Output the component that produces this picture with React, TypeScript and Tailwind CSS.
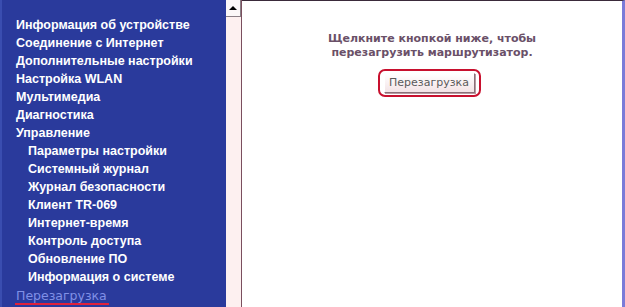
import React from "react";

const items: { label: string; indent?: boolean; active?: boolean }[] = [
  { label: "Информация об устройстве" },
  { label: "Соединение с Интернет" },
  { label: "Дополнительные настройки" },
  { label: "Настройка WLAN" },
  { label: "Мультимедиа" },
  { label: "Диагностика" },
  { label: "Управление" },
  { label: "Параметры настройки", indent: true },
  { label: "Системный журнал", indent: true },
  { label: "Журнал безопасности", indent: true },
  { label: "Клиент TR-069", indent: true },
  { label: "Интернет-время", indent: true },
  { label: "Контроль доступа", indent: true },
  { label: "Обновление ПО", indent: true },
  { label: "Информация о системе", indent: true },
  { label: "Перезагрузка", indent: false, active: true },
];

export default function App() {
  return (
    <div
      className="flex h-[307px] w-[625px] overflow-hidden bg-white"
      style={{ fontFamily: '"DejaVu Sans", Verdana, sans-serif' }}
    >
      <div
        className="h-full w-[226px] shrink-0 border-l-2 border-[#3a4db0] bg-[#2a3a9c] pl-[13px] pt-[16px]"
        style={{ fontFamily: '"Liberation Sans", Arial, sans-serif' }}
      >
        {items.map((it) =>
          it.active ? (
            <div key={it.label} className="h-[18px] leading-[18px]">
              <span
                className="relative pl-[1px] text-[12.5px] text-[#8090e6]"
                style={{ fontFamily: '"DejaVu Sans", Tahoma, sans-serif' }}
              >
                {it.label}
                <span className="absolute left-0 right-[-2px] top-[15px] h-[2px] bg-[#e0203a]" />
              </span>
            </div>
          ) : (
            <div
              key={it.label}
              className={`h-[18px] whitespace-nowrap text-[12.5px] font-bold leading-[18px] text-white ${
                it.indent ? "pl-[13px]" : "pl-[1px]"
              }`}
            >
              {it.label}
            </div>
          )
        )}
      </div>
      <div className="flex h-full w-[16px] shrink-0 flex-col border-r border-[#7a4f5e] bg-[#fdf0f0]">
        <div className="flex h-[17px] items-center justify-center border-b border-r border-[#8a7f86] bg-[#fbf7f8]">
          <div className="h-0 w-0 border-x-[4px] border-b-[4px] border-x-transparent border-b-black" />
        </div>
      </div>
      <div className="flex h-full flex-1 flex-col items-center border-t border-[#3a2a3a] border-r-[3px] border-r-[#7b7bd8] pt-[31px]">
        <p className="text-center text-[11px] font-bold leading-[14px] text-[#6a5068]">
          Щелкните кнопкой ниже, чтобы
          <br />
          перезагрузить маршрутизатор.
        </p>
        <div className="mr-[6px] mt-[9px] flex rounded-[7px] border-2 border-[#c8102e] px-[4px] py-[2px]">
          <button
            className="flex h-[20px] w-[91px] items-center justify-center border border-l-[#ffffff] border-t-[#ffffff] border-r-[#8a7078] border-b-[#8a7078] bg-gradient-to-b from-[#ffffff] to-[#f3e3e6] text-[11px] leading-[18px] text-[#5a5a5a] shadow-[1px_1px_0_#b89aa2]"
            style={{ fontFamily: '"DejaVu Sans", Tahoma, sans-serif' }}
          >
            Перезагрузка
          </button>
        </div>
      </div>
    </div>
  );
}
